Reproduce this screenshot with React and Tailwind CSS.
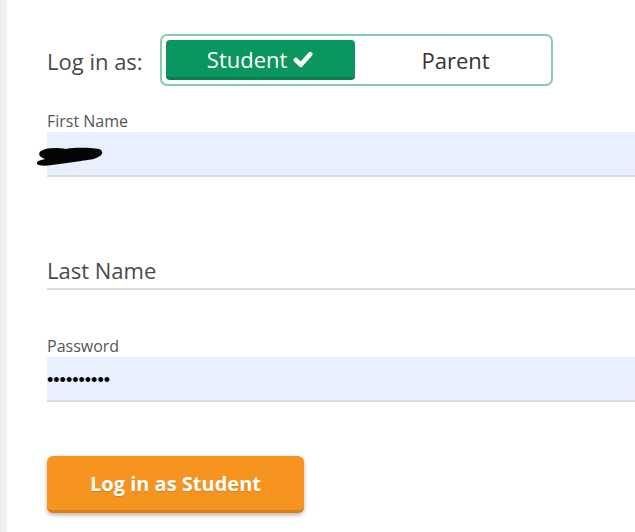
export default function App() {
  return (
    <div className="flex h-[532px] w-[635px] overflow-hidden bg-white" style={{ fontFamily: '"Open Sans", "Noto Sans", sans-serif' }}>
      <div className="w-[7px] shrink-0 bg-gradient-to-r from-[#ececec] to-[#f6f6f6]" />
      <div className="flex flex-1 flex-col pl-[40px] pt-[34px]">
        <div className="flex items-center">
          <span className="mt-[2px] text-[22px] leading-none text-[#4a4a4a]">Log in as:</span>
          <div className="ml-[17px] flex h-[52px] w-[393px] rounded-[7px] border-2 border-[#85ceab] p-[4px]">
            <div className="flex w-[189px] items-center justify-center gap-[6px] rounded-[4px] border-b-[3px] border-[#07804f] bg-[#0a965f] text-white">
              <span className="text-[22px] leading-none">Student</span>
              <svg width="20" height="17" viewBox="0 0 20 17" className="mt-[2px]">
                <path d="M2.8 9 L7.8 13.8 L17.2 3.2" fill="none" stroke="white" strokeWidth="4.6" strokeLinecap="round" strokeLinejoin="round" />
              </svg>
            </div>
            <div className="flex flex-1 items-center justify-center pl-[10px] text-[22px] leading-none text-[#333]">Parent</div>
          </div>
        </div>

        <div className="mt-[25px] text-[16px] leading-[20px] text-[#555]">First Name</div>
        <div className="relative mt-[1px] h-[45px] border-b-2 border-[#dcdcdc] bg-[#e8f0fe]">
          <svg className="absolute left-[-11px] top-[14px]" width="68" height="22" viewBox="0 0 68 22">
            <path d="M5 5 C12 1 22 2 30 3 C42 1 54 2 63 3 C68 5 67 9 62 11 C60 13 52 14 45 15 C36 16 26 18 16 19 C9 20 3 20 1 18 C0 15 5 14 9 13 C4 11 1 8 5 5 Z" fill="#050505" />
            <path d="M6 9 C20 6 40 7 64 7" stroke="#050505" strokeWidth="3" fill="none" />
          </svg>
        </div>

        <div className="mt-[68px] flex h-[45px] items-center border-b-2 border-[#dcdcdc]">
          <span className="mt-[6px] text-[22px] leading-none text-[#4a4a4a]">Last Name</span>
        </div>

        <div className="mt-[46px] text-[16px] leading-[20px] text-[#555]">Password</div>
        <div className="mt-[1px] flex h-[45px] items-center border-b-2 border-[#dcdcdc] bg-[#e8f0fe]">
          <span className="mt-[2px] text-[18px] leading-none text-black" style={{ fontFamily: '"Liberation Sans", sans-serif' }}>••••••••••</span>
        </div>

        <button className="mt-[54px] flex h-[57px] w-[257px] items-center justify-center rounded-[6px] border-b-[3px] border-[#d98118] bg-[#f7941f] pt-[2px] text-[20px] font-bold text-white shadow-[0_2px_4px_rgba(0,0,0,0.3)] [text-shadow:0_1px_1px_rgba(0,0,0,0.15)]">
          Log in as Student
        </button>
      </div>
    </div>
  );
}
